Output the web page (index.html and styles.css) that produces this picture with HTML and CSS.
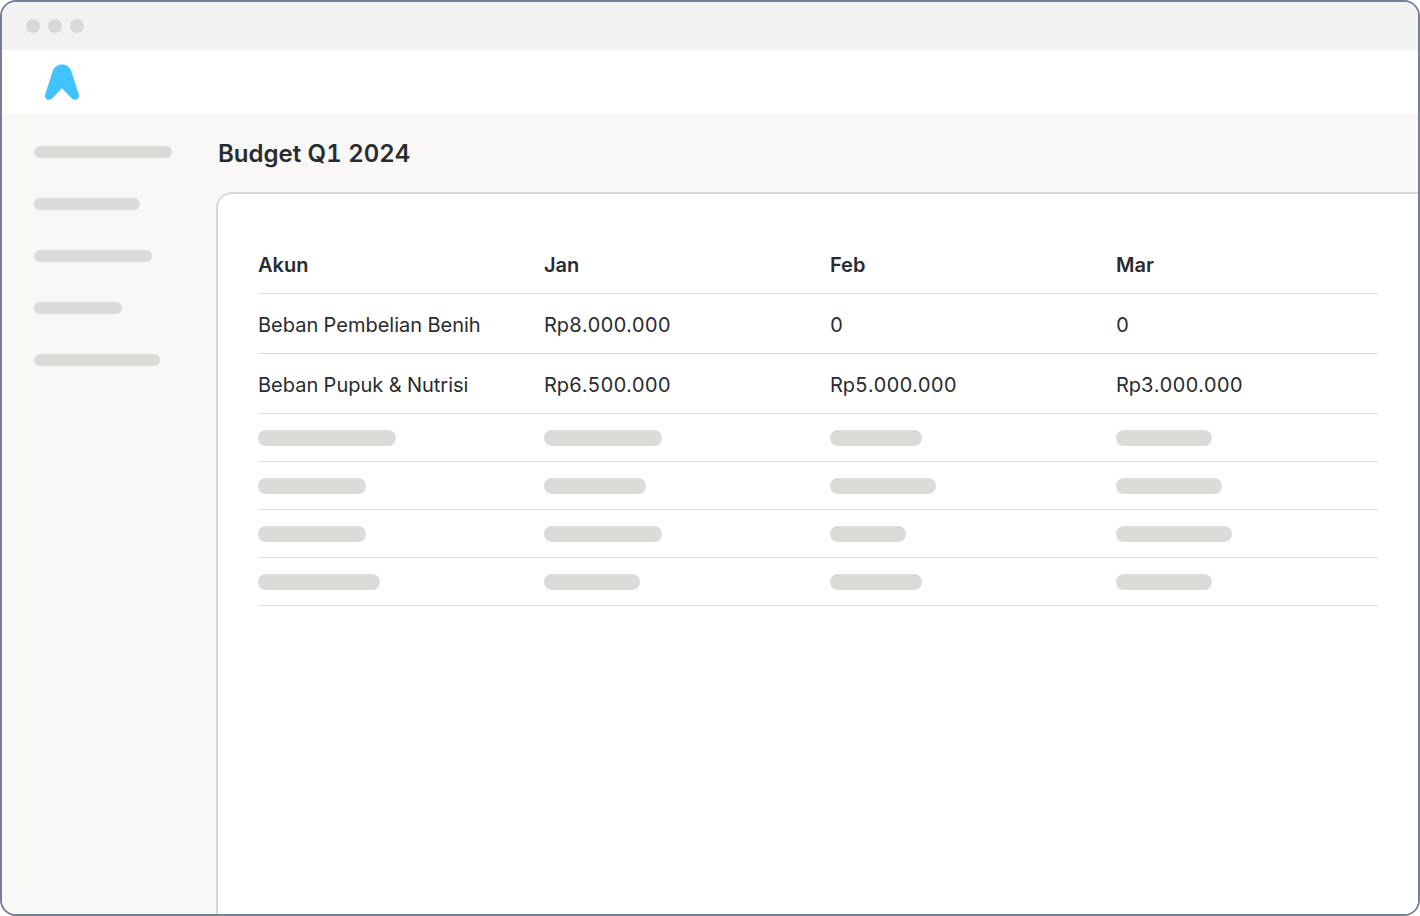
FILE: index.html
```
<!DOCTYPE html>
<html lang="id">
<head>
    <meta charset="utf-8">
    <title>Budget Q1 2024</title>
    <link rel="stylesheet" href="styles.css">
</head>
<body>
    <div class="window">
        <div class="titlebar">
            <span class="dot"></span>
            <span class="dot"></span>
            <span class="dot"></span>
        </div>

        <header class="topbar">
            <svg class="logo" width="36" height="36" viewBox="0 0 36 36" aria-hidden="true">
                <path fill="#40c3ff" d="M18 .6C22.300 .6 25.700 3 27.200 7L34.700 30C35.600 33 34 35.800 31.200 35.800C29.900 35.800 28.900 35.400 27.900 34.500L18 24.300L8.100 34.500C7.100 35.400 6.100 35.800 4.800 35.800C2 35.800 .400 33 1.300 30L8.800 7C10.300 3 13.700 .6 18 .6Z"/>
            </svg>
        </header>

        <div class="layout">
            <aside class="sidebar">
                <span class="line" style="width: 138px"></span>
                <span class="line" style="width: 106px"></span>
                <span class="line" style="width: 118px"></span>
                <span class="line" style="width: 88px"></span>
                <span class="line" style="width: 126px"></span>
            </aside>

            <main class="content">
                <h1>Budget Q1 2024</h1>

                <div class="card">
                    <table class="budget">
                        <thead>
                            <tr><th>Akun</th><th>Jan</th><th>Feb</th><th>Mar</th></tr>
                        </thead>
                        <tbody>
                            <tr><td>Beban Pembelian Benih</td><td>Rp8.000.000</td><td>0</td><td>0</td></tr>
                            <tr><td>Beban Pupuk &amp; Nutrisi</td><td>Rp6.500.000</td><td>Rp5.000.000</td><td>Rp3.000.000</td></tr>
                            <!-- placeholder rows -->
                            <tr class="placeholder">
                                <td><span class="bar" style="width: 138px"></span></td>
                                <td><span class="bar" style="width: 118px"></span></td>
                                <td><span class="bar" style="width: 92px"></span></td>
                                <td><span class="bar" style="width: 96px"></span></td>
                            </tr>
                            <tr class="placeholder">
                                <td><span class="bar" style="width: 108px"></span></td>
                                <td><span class="bar" style="width: 102px"></span></td>
                                <td><span class="bar" style="width: 106px"></span></td>
                                <td><span class="bar" style="width: 106px"></span></td>
                            </tr>
                            <tr class="placeholder">
                                <td><span class="bar" style="width: 108px"></span></td>
                                <td><span class="bar" style="width: 118px"></span></td>
                                <td><span class="bar" style="width: 76px"></span></td>
                                <td><span class="bar" style="width: 116px"></span></td>
                            </tr>
                            <tr class="placeholder">
                                <td><span class="bar" style="width: 122px"></span></td>
                                <td><span class="bar" style="width: 96px"></span></td>
                                <td><span class="bar" style="width: 92px"></span></td>
                                <td><span class="bar" style="width: 96px"></span></td>
                            </tr>
                        </tbody>
                    </table>
                </div>
            </main>
        </div>
    </div>
</body>
</html>
```
FILE: styles.css
```
* {
    box-sizing: border-box;
}
body {
    margin: 0;
    background-color: white;
    color: #282c2f;
    font-family: Inter, sans-serif;
    font-size: 20px;
    font-variant-numeric: tabular-nums;
    line-height: 28px;
}
.window {
    display: flex;
    flex-direction: column;
    min-height: 100vh;
    border: 2px solid #748094;
    border-radius: 16px;
    overflow: hidden;
}
.titlebar {
    display: flex;
    align-items: center;
    gap: 8px;
    height: 48px;
    padding: 0 24px;
    background-color: #f2f2f2;
}
.dot {
    width: 14px;
    height: 14px;
    border-radius: 50%;
    background-color: #d9d9d9;
}
.topbar {
    display: flex;
    align-items: center;
    height: 64px;
    padding: 0 42px;
    background-color: white;
}
.logo {
    display: block;
}
.layout {
    display: flex;
    flex: 1;
    background-color: #f9f8f6;
}
.sidebar {
    display: flex;
    flex-direction: column;
    gap: 40px;
    width: 214px;
    padding: 32px;
}
.line {
    height: 12px;
    border-radius: 6px;
    background-color: #dcdbd8;
}
.content {
    display: flex;
    flex: 1;
    flex-direction: column;
}
h1 {
    margin: 0;
    padding: 24px 2px 22px;
    font-size: 24px;
    font-weight: 600;
    line-height: 32px;
}
.card {
    flex: 1;
    padding: 40px;
    border: 2px solid #d8d8d6;
    border-right: 0;
    border-bottom: 0;
    border-top-left-radius: 16px;
    background-color: white;
}
.budget {
    display: block;
}
.budget thead,
.budget tbody {
    display: block;
}
.budget tr {
    display: grid;
    grid-template-columns: repeat(4, 1fr);
    column-gap: 24px;
    padding: 17px 0 14px;
    border-bottom: 1px solid #dededd;
}
.budget .placeholder {
    padding: 16px 0 15px;
}
.budget th,
.budget td {
    padding: 0;
    text-align: left;
}
.budget th {
    font-weight: 600;
}
.bar {
    display: block;
    height: 16px;
    border-radius: 8px;
    background-color: #dcdbd8;
}
```
